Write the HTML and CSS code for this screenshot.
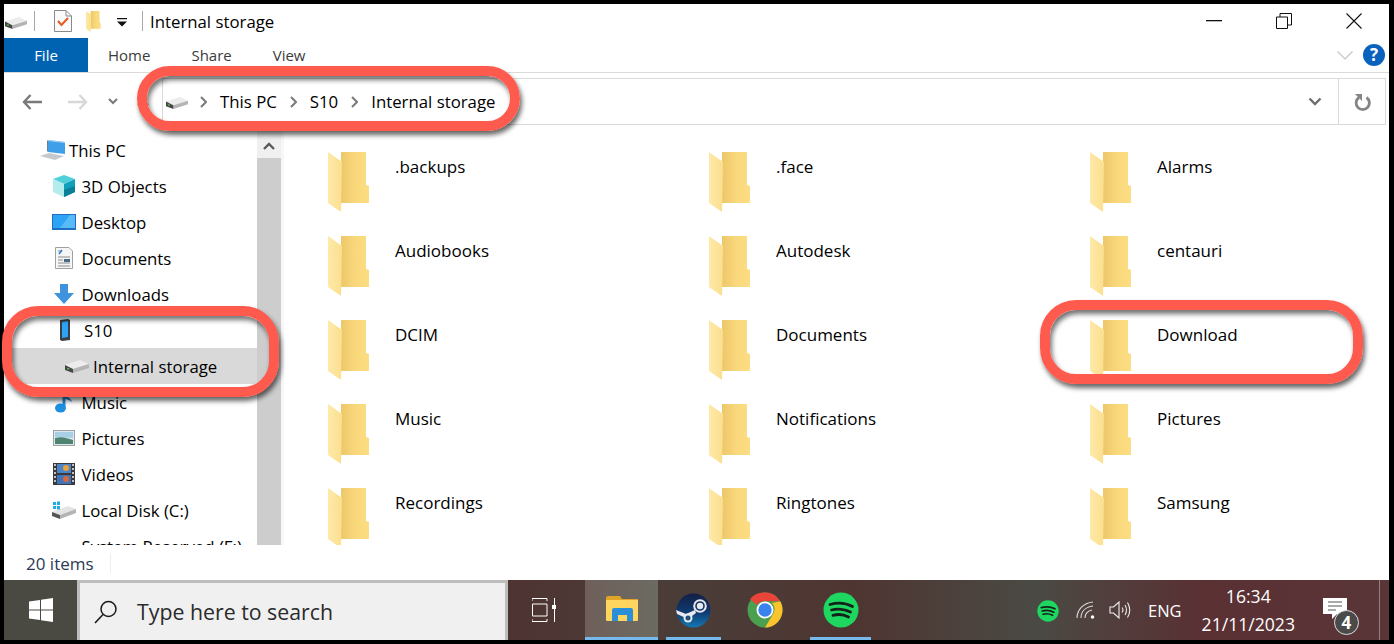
FILE: index.html
```html
<!DOCTYPE html>
<html>
<head>
<meta charset="utf-8">
<title>Internal storage</title>
<link rel="stylesheet" href="styles.css">
</head>
<body>
<svg class="defs" width="0" height="0">
  <defs>
    <linearGradient id="fold" x1="0" x2="1" y1="0" y2="0"><stop offset="0" stop-color="#e3b850"/><stop offset=".35" stop-color="#eec96c"/><stop offset=".7" stop-color="#fad97c"/><stop offset="1" stop-color="#fcdd82"/></linearGradient>
    <linearGradient id="flap" x1="0" x2="1" y1="0" y2="0"><stop offset="0" stop-color="#fee9a9"/><stop offset="1" stop-color="#fbdf8e"/></linearGradient>
    <symbol id="folder" viewBox="0 0 42 60" preserveAspectRatio="none">
      <path d="M0 0H38V33L41 34V51H13V0Z" fill="url(#fold)"/>
      <path d="M0 0L14 10L13 60L0 51Z" fill="url(#flap)"/>
    </symbol>
    <symbol id="drive" viewBox="0 0 24 14">
      <path d="M0 6L15 1L24 5L8 10Z" fill="#ececec"/>
      <path d="M8 10L24 5V9L8 14Z" fill="#b4b4b4"/>
      <path d="M0 6L8 10V14L0 11Z" fill="#474747"/>
      <rect x="2" y="9" width="2.200" height="1.400" fill="#4fc04f"/>
    </symbol>
    <symbol id="spot" viewBox="0 0 36 36">
      <circle cx="18" cy="18" r="17.500" fill="#1ed760"/>
      <path d="M7 12.500C14 10.500 23 11 29.500 14.500M8.500 18C14 16.500 22 17 27.500 20M10 23.300C15 22 21 22.500 25.500 25" fill="none" stroke="#14231a" stroke-width="2.800" stroke-linecap="round"/>
    </symbol>
  </defs>
</svg>

<div class="window">
  <div class="titlebar">
    <svg class="ico-drive" width="22" height="13"><use href="#drive"/></svg>
    <span class="vsep"></span>
    <svg class="ico-prop" width="18" height="22" viewBox="0 0 18 22"><path d="M.5.500H12L17.500 6V21.500H.5Z" fill="#fafafa" stroke="#8a8a8a"/><path d="M12 .5V6H17.500" fill="none" stroke="#8a8a8a"/><path d="M4 11L7.500 15L14 8" fill="none" stroke="#e8591f" stroke-width="2"/></svg>
    <svg class="ico-qfold" width="15" height="21"><use href="#folder" width="15" height="21"/></svg>
    <svg class="ico-qa" width="10" height="9" viewBox="0 0 10 9"><path d="M0 0H10V1.300H0ZM0 3.500H10L5 8.500Z" fill="#111"/></svg>
    <span class="vsep second"></span>
    <span class="title">Internal storage</span>
    <div class="winbtns">
      <svg width="16" height="2" viewBox="0 0 16 2"><rect width="16" height="1.300" fill="#111"/></svg>
      <svg width="16" height="16" viewBox="0 0 16 16"><path d="M.5 4H11.500V15.500H.5ZM4 4V.5H15.500V12H11.500" fill="none" stroke="#111"/></svg>
      <svg width="16" height="16" viewBox="0 0 16 16"><path d="M.5.500L15.500 15.500M15.500.5L.5 15.500" stroke="#111" stroke-width="1.100"/></svg>
    </div>
  </div>

  <div class="ribbon">
    <div class="tab tab-file">File</div>
    <div class="tab tab-home">Home</div>
    <div class="tab tab-share">Share</div>
    <div class="tab tab-view">View</div>
    <svg class="rib-chev" width="16" height="9" viewBox="0 0 16 9"><path d="M.5.500L8 8L15.500.5" fill="none" stroke="#c4c4c4" stroke-width="1.200"/></svg>
    <div class="help">?</div>
  </div>

  <div class="navbar">
    <svg class="nav-back" width="20" height="16" viewBox="0 0 20 16"><path d="M8.500 1L2 8L8.500 15M2 8H20" fill="none" stroke="#7a7a7a" stroke-width="2.400"/></svg>
    <svg class="nav-fwd" width="20" height="16" viewBox="0 0 20 16"><path d="M11.500 1L18 8L11.500 15M18 8H0" fill="none" stroke="#d8d8d8" stroke-width="2.400"/></svg>
    <svg class="nav-down" width="10" height="7" viewBox="0 0 10 7"><path d="M1 1L5 5L9 1" fill="none" stroke="#7a7a7a" stroke-width="2"/></svg>
    <svg class="nav-up" width="12" height="8" viewBox="0 0 12 8"><path d="M1 7L6 2L11 7" fill="none" stroke="#7a7a7a" stroke-width="2"/></svg>
    <div class="address">
      <svg class="addr-drive" width="22" height="13"><use href="#drive"/></svg>
      <svg class="crumb first" width="7" height="12" viewBox="0 0 7 12"><path d="M1 1L6 6L1 11" fill="none" stroke="#7a7a7a" stroke-width="2"/></svg>
      <span>This PC</span>
      <svg class="crumb" width="7" height="12" viewBox="0 0 7 12"><path d="M1 1L6 6L1 11" fill="none" stroke="#7a7a7a" stroke-width="2"/></svg>
      <span>S10</span>
      <svg class="crumb" width="7" height="12" viewBox="0 0 7 12"><path d="M1 1L6 6L1 11" fill="none" stroke="#7a7a7a" stroke-width="2"/></svg>
      <span>Internal storage</span>
      <svg class="addr-chev" width="14" height="9" viewBox="0 0 14 9"><path d="M1.500 1.500L7 7L12.500 1.500" fill="none" stroke="#6e6e6e" stroke-width="2.400"/></svg>
      <div class="addr-refresh">
        <svg width="17" height="18" viewBox="0 0 17 18"><path d="M5 4.500A6.600 6.600 0 1 0 12.500 4.500" fill="none" stroke="#858585" stroke-width="2.800"/><path d="M1 1H8V8Z" fill="#858585"/></svg>
      </div>
    </div>
  </div>

  <div class="main">
    <div class="sidebar">
      <div class="tree">
        <div class="row lvl0">
          <svg width="26" height="22" viewBox="0 0 26 22"><path d="M8 1L25 3V15L8 13Z" fill="#3f9fe8"/><path d="M8 1L25 3V4L8 2Z" fill="#a9d4f2"/><path d="M8 1V13L7 12V2Z" fill="#6a7f8f"/><path d="M0 17L9 14L24 17L15 21Z" fill="#c4c9cd"/></svg>
          <span>This PC</span>
        </div>
        <div class="row">
          <svg width="24" height="22" viewBox="0 0 24 22"><path d="M12 0L23 4L12 9L1 4Z" fill="#4fd0d8"/><path d="M1 4L12 9V22L1 17Z" fill="#b2ecec"/><path d="M23 4L12 9V22L23 17Z" fill="#10a0bc"/><path d="M23 11L12 15V22L23 17Z" fill="#0a7f98"/></svg>
          <span>3D Objects</span>
        </div>
        <div class="row">
          <svg width="24" height="16" viewBox="0 0 24 16"><rect width="24" height="16" fill="#1f6fc0"/><path d="M1 1H23V14H1Z" fill="#2ea3f5"/><path d="M18 1H23V14H8Z" fill="#58baf7"/></svg>
          <span>Desktop</span>
        </div>
        <div class="row">
          <svg width="22" height="22" viewBox="0 0 22 22"><path d="M2.500.5H16L19.500 4V21.500H2.500Z" fill="#f6f6f6" stroke="#a0a0a0"/><path d="M5 4H9M5 10H17M5 13H10M5 16H17M5 19H17" stroke="#8a8a8a"/><path d="M6 7L9 3" stroke="#2f7fd0" stroke-width="1.500"/><rect x="11" y="12" width="6" height="3" fill="#4a6a8a"/></svg>
          <span>Documents</span>
        </div>
        <div class="row">
          <svg width="20" height="20" viewBox="0 0 20 20"><path d="M6 0H14V9H20L10 20L0 9H6Z" fill="#3f92dc"/></svg>
          <span>Downloads</span>
        </div>
        <div class="row row-s10">
          <svg width="10" height="22" viewBox="0 0 10 22"><path d="M0 1L8 0L10 1V21L2 22L0 21Z" fill="#3a3f44"/><path d="M2 3L8 2V18L2 19Z" fill="#2ea3f5"/></svg>
          <span>S10</span>
        </div>
        <div class="row row-sel">
          <svg width="24" height="14"><use href="#drive"/></svg>
          <span>Internal storage</span>
        </div>
        <div class="row">
          <svg width="18" height="22" viewBox="0 0 18 22"><path d="M9 1V16" stroke="#1e90e0" stroke-width="3"/><path d="M9 1C10 6 17 6 17 12C17 9 12 9 9 7Z" fill="#1e90e0"/><ellipse cx="5.500" cy="17" rx="5.500" ry="4.500" fill="#1e90e0"/></svg>
          <span>Music</span>
        </div>
        <div class="row">
          <svg width="22" height="16" viewBox="0 0 22 16"><rect x=".5" y=".5" width="21" height="15" fill="#dbeaf2" stroke="#a0a0a0"/><path d="M2 2H20V8L2 7Z" fill="#a9cfe4"/><path d="M2 8C9 6 14 8 20 10V14H2Z" fill="#4f8570"/></svg>
          <span>Pictures</span>
        </div>
        <div class="row">
          <svg width="22" height="22" viewBox="0 0 22 22"><rect width="22" height="22" fill="#3a3a3a"/><rect x="4" y="1" width="14" height="9" fill="#4d84c9"/><rect x="4" y="12" width="14" height="9" fill="#3f74bd"/><circle cx="13" cy="5" r="3" fill="#e8a23a"/><circle cx="13" cy="16" r="3" fill="#d8683a"/><path d="M1 2H3M1 6H3M1 10H3M1 14H3M1 18H3M19 2H21M19 6H21M19 10H21M19 14H21M19 18H21" stroke="#eee" stroke-width="1.500"/></svg>
          <span>Videos</span>
        </div>
        <div class="row">
          <svg width="24" height="18" viewBox="0 0 24 18"><path d="M0 11L16 5L24 8L8 14Z" fill="#e4e4e4"/><path d="M8 14L24 8V12L8 18Z" fill="#b4b4b4"/><path d="M0 11L8 14V18L0 15Z" fill="#555"/><path d="M1 1H4V4H1ZM5 .5H8V4H5ZM1 5H4V8H1ZM5 5H8V8.500H5Z" fill="#1fa9e8"/></svg>
          <span>Local Disk (C:)</span>
        </div>
        <div class="row">
          <span class="no-ico"></span>
          <span>System Reserved (F:)</span>
        </div>
      </div>
      <div class="scrollbar">
        <div class="scroll-up">
          <svg width="12" height="8" viewBox="0 0 12 8"><path d="M1 7L6 2L11 7" fill="none" stroke="#5a5a5a" stroke-width="2.400"/></svg>
        </div>
      </div>
    </div>

    <div class="files">
      <div class="file"><svg width="42" height="60"><use href="#folder"/></svg><span>.backups</span></div>
      <div class="file"><svg width="42" height="60"><use href="#folder"/></svg><span>.face</span></div>
      <div class="file"><svg width="42" height="60"><use href="#folder"/></svg><span>Alarms</span></div>
      <div class="file"><svg width="42" height="60"><use href="#folder"/></svg><span>Audiobooks</span></div>
      <div class="file"><svg width="42" height="60"><use href="#folder"/></svg><span>Autodesk</span></div>
      <div class="file"><svg width="42" height="60"><use href="#folder"/></svg><span>centauri</span></div>
      <div class="file"><svg width="42" height="60"><use href="#folder"/></svg><span>DCIM</span></div>
      <div class="file"><svg width="42" height="60"><use href="#folder"/></svg><span>Documents</span></div>
      <div class="file"><svg width="42" height="60"><use href="#folder"/></svg><span>Download</span></div>
      <div class="file"><svg width="42" height="60"><use href="#folder"/></svg><span>Music</span></div>
      <div class="file"><svg width="42" height="60"><use href="#folder"/></svg><span>Notifications</span></div>
      <div class="file"><svg width="42" height="60"><use href="#folder"/></svg><span>Pictures</span></div>
      <div class="file"><svg width="42" height="60"><use href="#folder"/></svg><span>Recordings</span></div>
      <div class="file"><svg width="42" height="60"><use href="#folder"/></svg><span>Ringtones</span></div>
      <div class="file"><svg width="42" height="60"><use href="#folder"/></svg><span>Samsung</span></div>
    </div>
  </div>

  <div class="statusbar"><span class="count">20 items</span><span class="status-sep"></span></div>

  <div class="taskbar">
    <div class="start">
      <svg width="24" height="24" viewBox="0 0 24 24"><path d="M0 3.500L11 2V11.500H0ZM12 1.800L24 0V11.500H12ZM0 12.500H11V22L0 20.500ZM12 12.500H24V24L12 22.200Z" fill="#fff"/></svg>
    </div>
    <div class="search">
      <svg width="24" height="24" viewBox="0 0 24 24"><circle cx="14.500" cy="9" r="7.500" fill="none" stroke="#1a1a1a" stroke-width="1.500"/><path d="M9 14.500L1 23" stroke="#1a1a1a" stroke-width="1.600"/></svg>
      <span>Type here to search</span>
    </div>
    <div class="taskview">
      <svg width="24" height="24" viewBox="0 0 24 24"><path d="M0 .5H15V3M0 .5V3M0 23.500H15V21M0 23.500V21M.5 6H15V18H.5ZM22.500 0V24" fill="none" stroke="#fff"/><rect x="20" y="7" width="4.500" height="4" fill="#fff"/></svg>
    </div>
    <div class="app app-active">
      <svg width="32" height="26" viewBox="0 0 32 26"><path d="M0 2Q0 0 2 0H14L16 3H32V6H0Z" fill="#e0a526"/><path d="M0 4H32V24Q32 25 31 25H1Q0 25 0 24Z" fill="#fed65f"/><path d="M6 25V14Q6 12 8 12H25Q27 12 27 14V25H21V19H12V25Z" fill="#2a8fd8"/></svg>
    </div>
    <div class="app app-steam">
      <svg width="35" height="35" viewBox="0 0 35 35"><defs><linearGradient id="stm" x1="0" x2="0" y1="0" y2="1"><stop offset="0" stop-color="#131f45"/><stop offset=".55" stop-color="#0f3a70"/><stop offset="1" stop-color="#1478b4"/></linearGradient></defs><circle cx="17.500" cy="17.500" r="17" fill="url(#stm)"/><circle cx="24" cy="13" r="5.800" fill="none" stroke="#e8e8ee" stroke-width="2"/><circle cx="24" cy="13" r="3.200" fill="#e8e8ee"/><path d="M0 17L10 21L19 17L20 20L12 26L1 21Z" fill="#e8e8ee"/><circle cx="12" cy="25" r="4.500" fill="#e8e8ee"/><circle cx="12" cy="25" r="2.500" fill="#1b4f80"/></svg>
    </div>
    <div class="app app-chrome">
      <svg width="36" height="36" viewBox="0 0 36 36"><circle cx="18" cy="18" r="17.500" fill="#4aa04f"/><path d="M18 .5A17.500 17.500 0 0 1 33.200 9.300H18A9 9 0 0 0 10 13L3 7A17.500 17.500 0 0 1 18 .5Z" fill="#e9443a"/><path d="M33.200 9.300A17.500 17.500 0 0 1 18 35.500L25.800 22.500A9 9 0 0 0 25 11Z" fill="#fbc42d"/><circle cx="18" cy="18" r="8.500" fill="#fff"/><circle cx="18" cy="18" r="6.700" fill="#3a82ee"/></svg>
    </div>
    <div class="app app-spotify">
      <svg width="36" height="36"><use href="#spot"/></svg>
    </div>
    <div class="tray">
      <svg class="tray-spot" width="22" height="22"><use href="#spot"/></svg>
      <svg class="tray-wifi" width="20" height="18" viewBox="0 0 20 18"><path d="M1 17C1 9 7 2 17 1M5 17C5 11 9 6 17 5M9 17C9 13 12 10 16 9" fill="none" stroke="#dcdcdc" stroke-width="1.100"/><circle cx="16.500" cy="16" r="1.800" fill="#fff"/></svg>
      <svg class="tray-vol" width="22" height="18" viewBox="0 0 22 18"><path d="M1 6H4.500L10 1V17L4.500 12H1Z" fill="none" stroke="#eee" stroke-width="1.100"/><path d="M13 6.500Q15 9 13 11.500M16 4Q19 9 16 14M18.500 1.500Q23 9 18.500 16.500" fill="none" stroke="#eee" stroke-width="1.100"/></svg>
      <span class="lang">ENG</span>
      <div class="clock"><span>16:34</span><span>21/11/2023</span></div>
      <div class="notif">
        <svg width="24" height="22" viewBox="0 0 24 22"><path d="M0 0H24V16H14L9 21V16H0Z" fill="#fff"/><path d="M5 4H19M5 8H19M5 12H13" stroke="#555" stroke-width="1.200"/></svg>
        <span class="badge">4</span>
      </div>
      <span class="showdesk"></span>
    </div>
  </div>

  <div class="mark mark-address"></div>
  <div class="mark mark-tree"></div>
  <div class="mark mark-download"></div>
</div>
</body>
</html>
```

FILE: styles.css
```css
html, body { margin: 0; padding: 0; height: 100%; }
body { background: #000; font-family: "Open Sans", "Noto Sans", sans-serif; color: #000; overflow: hidden; }
svg { display: block; flex: none; }
.defs { position: absolute; }

.window { position: relative; margin: 4px 5px 4px 4px; height: 636px; width: 1385px; background: #fff; display: flex; flex-direction: column; }

/* title bar */
.titlebar { height: 34px; display: flex; align-items: center; flex: none; }
.ico-drive { margin-left: 1px; margin-top: 2px; }
.vsep { width: 1px; height: 20px; background: #a8a8a8; margin-left: 7px; }
.ico-prop { margin-left: 19px; }
.ico-qfold { margin-left: 14px; }
.ico-qa { margin-left: 16px; margin-top: 2px; }
.vsep.second { margin-left: 15px; }
.title { margin-left: 7px; font-size: 16.800px; }
.winbtns { margin-left: auto; display: flex; align-items: center; gap: 54px; margin-right: 27px; }

/* ribbon */
.ribbon { height: 34px; flex: none; display: flex; align-items: center; border-bottom: 1px solid #dadada; }
.tab { font-size: 15px; color: #3b3b3b; }
.tab-file { width: 84px; height: 34px; background: #0063b1; color: #fff; text-align: center; line-height: 34px; }
.tab-home { margin-left: 20px; }
.tab-share { margin-left: 41px; }
.tab-view { margin-left: 41px; }
.rib-chev { margin-left: auto; }
.help { width: 22px; height: 22px; border-radius: 50%; background: #0b62bd; color: #fff; font-size: 17px; font-weight: 700; text-align: center; line-height: 22px; margin: 0 4px 0 10px; }

/* address row */
.navbar { height: 52px; box-sizing: border-box; padding-top: 5px; flex: none; display: flex; align-items: center; }
.nav-back { margin-left: 18px; }
.nav-fwd { margin-left: 26px; }
.nav-down { margin-left: 20px; }
.nav-up { margin-left: 19px; }
.address { margin-left: 13px; height: 45px; flex: 1; margin-right: 3px; border: 1px solid #dadada; display: flex; align-items: center; font-size: 16.800px; }
.address span { margin-right: 13px; }
.addr-drive { margin-left: 3px; margin-top: 2px; }
.crumb { margin-right: 13px; }
.crumb.first { margin-left: 12px; }
.addr-chev { margin-left: auto; margin-right: 16px; }
.addr-refresh { width: 46px; height: 45px; border-left: 1px solid #dadada; display: flex; align-items: center; justify-content: center; }

/* tree + files */
.main { height: 420px; flex: none; display: flex; overflow: hidden; }
.sidebar { width: 277px; flex: none; display: flex; }
.tree { width: 253px; padding-top: 7px; flex: none; }
.row { height: 36px; display: flex; align-items: center; font-size: 16.800px; padding-left: 48px; }
.row svg { width: 24px; margin-right: 5.500px; }
.row span { white-space: nowrap; }
.row.lvl0 { padding-left: 36px; }
.row.lvl0 svg { width: 26px; margin-right: 3px; }
.row-s10 { padding-left: 48.500px; }
.row-s10 svg { margin-right: 7.500px; }
.row-sel { background: #d9d9d9; margin-left: 7px; padding-left: 54px; }
.row-sel svg { margin-right: 4px; }
.no-ico { width: 24px; margin-right: 5.500px; }
.scrollbar { width: 24px; flex: none; background: #cdcdcd; }
.scroll-up { height: 33px; box-sizing: border-box; padding-top: 9px; background: #f0f0f0; display: flex; align-items: center; justify-content: center; }

.files { flex: 1; display: grid; grid-template-columns: repeat(3, 381px); grid-auto-rows: 84px; padding: 27px 0 0 44px; border-left: 3px solid #f7f7f7; overflow: hidden; }
.file { display: flex; font-size: 17px; align-items: flex-start; }
.file span { margin-left: 25px; margin-top: 3px; }

/* status */
.statusbar { height: 35px; flex: none; display: flex; align-items: center; font-size: 17px; color: #2b3a55; }
.count { margin-left: 22px; margin-top: 2px; }
.status-sep { width: 1px; height: 20px; background: #eee; margin-left: 16px; }

/* taskbar */
.taskbar { height: 60px; flex: none; display: flex; align-items: stretch; color: #fff;
  background: linear-gradient(90deg, #4a4a42 0, #4a4a42 70px, #4e3432 510px, #4a3d38 680px, #4f3532 850px, #4a4a44 1030px, #5a3033 1200px, #5a3638 1385px); }
.start { width: 73px; display: flex; align-items: center; justify-content: center; }
.search { width: 425px; background: #f0f0f0; border: 3px solid #bdbdbd; border-bottom-width: 0; display: flex; align-items: center; color: #2b2b2b; font-size: 21.300px; }
.search svg { margin-left: 14px; }
.search span { margin-left: 19px; }
.taskview { width: 77px; box-sizing: border-box; padding-left: 24px; display: flex; align-items: center; }
.app { display: flex; align-items: center; justify-content: center; box-sizing: border-box; border-top: 3px solid transparent; border-bottom: 3px solid transparent; }
.app-active { width: 73px; background: linear-gradient(90deg, #6f5f5b, #6b6b62); background-clip: padding-box; border-top-width: 0; border-bottom-color: #76b9ed; }
.app-steam { width: 55px; margin-left: 8px; border-bottom-color: #76b9ed; }
.app-chrome { width: 36px; margin-left: 26px; }
.app-spotify { width: 61px; margin-left: 27px; border-bottom-color: #76b9ed; }
.tray { flex: 1; display: flex; align-items: center; }
.tray-spot { margin-left: 166px; margin-top: 2px; }
.tray-wifi { margin-left: 17px; }
.tray-vol { margin-left: 13px; }
.lang { margin-left: 17px; font-size: 16.500px; }
.clock { display: flex; flex-direction: column; align-items: center; margin-left: 20px; font-size: 17.600px; line-height: 28px; }
.notif { position: relative; margin-left: 28px; margin-top: -3px; }
.badge { position: absolute; left: 11px; top: 12px; box-sizing: border-box; width: 25px; height: 25px; border-radius: 50%; background: #4a4a4a; border: 1px solid #ddd; font-size: 17px; font-weight: 700; line-height: 23px; text-align: center; }
.showdesk { width: 1px; height: 60px; background: #8f7f7f; margin-left: auto; margin-right: 9px; }

/* red annotation outlines */
.mark { position: absolute; box-sizing: border-box; border: 10px solid #ff5a4e; border-radius: 36px; box-shadow: 2px 4px 5px rgba(0,0,0,.6), inset 2px 4px 5px rgba(0,0,0,.55); }
.mark-address { left: 133px; top: 62px; width: 383px; height: 65px; }
.mark-tree { left: -2px; top: 302px; width: 277px; height: 91px; }
.mark-download { left: 1036px; top: 296px; width: 323px; height: 84px; }
```
